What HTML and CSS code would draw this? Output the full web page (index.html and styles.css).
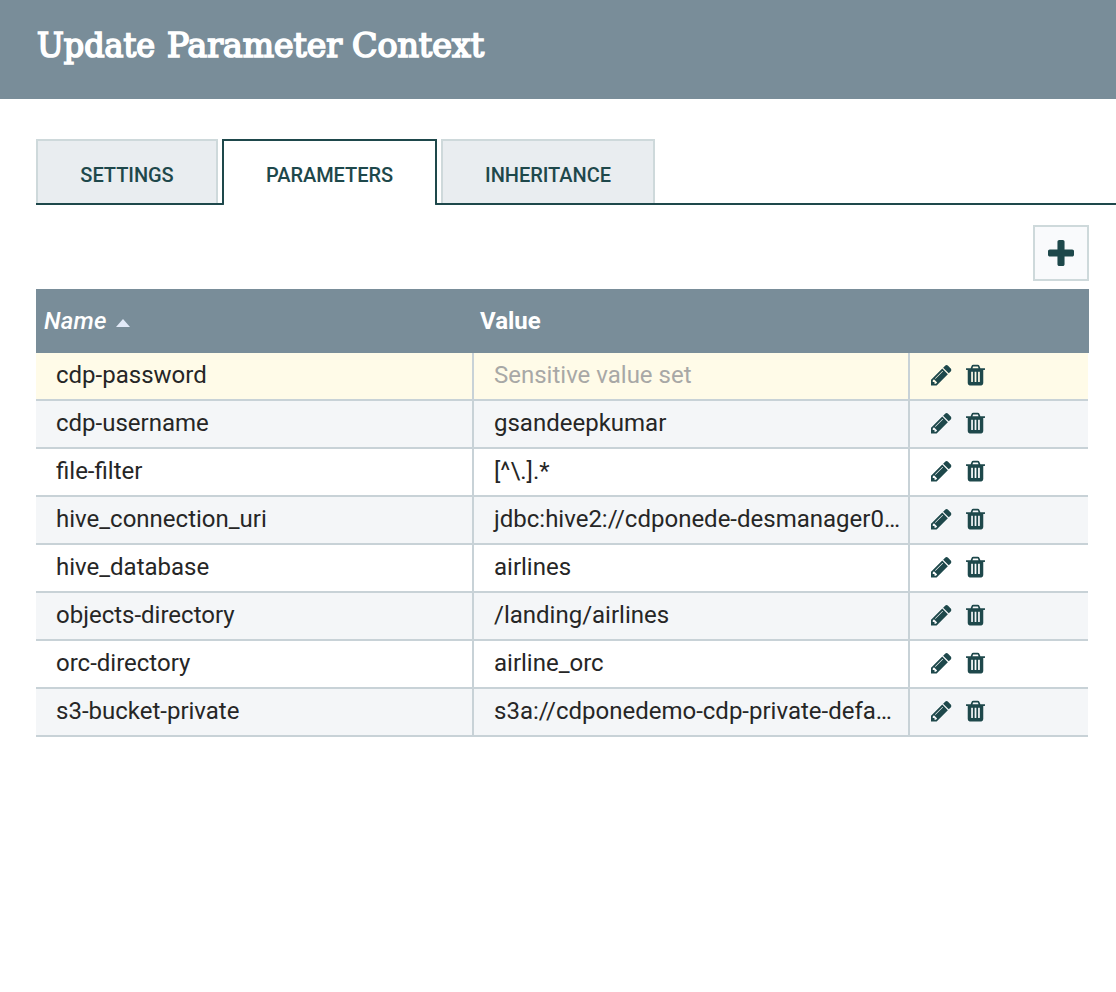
FILE: index.html
```
<!DOCTYPE html>
<html lang="en">
<head>
<meta charset="utf-8">
<title>Update Parameter Context</title>
<link rel="stylesheet" href="styles.css">
</head>
<body>
<svg class="defs" aria-hidden="true">
  <symbol id="pencil" viewBox="0 0 1515 1792"><path d="M363 1536l91-91-235-235-91 91v107h128v128h107zM886 608q0-22-22-22-10 0-17 7L305 1135q-7 7-7 17 0 22 22 22 10 0 17-7l542-542q7-7 7-17zM832 416l416 416-832 832H0v-416zM1515 512q0 53-37 90l-166 166-416-416 166-165q36-38 90-38 53 0 91 38l235 234q37 39 37 91z"/></symbol>
  <symbol id="trash" viewBox="0 0 1408 1792"><path d="M512 1376V672q0-14-9-23t-23-9h-64q-14 0-23 9t-9 23v704q0 14 9 23t23 9h64q14 0 23-9t9-23zM768 1376V672q0-14-9-23t-23-9h-64q-14 0-23 9t-9 23v704q0 14 9 23t23 9h64q14 0 23-9t9-23zM1024 1376V672q0-14-9-23t-23-9h-64q-14 0-23 9t-9 23v704q0 14 9 23t23 9h64q14 0 23-9t9-23zM480 384h448l-48-117q-7-9-17-11H546q-10 2-17 11zM1408 416v64q0 14-9 23t-23 9h-96v948q0 83-47 143.5t-113 60.5H288q-66 0-113-58.5T128 1464V512H32q-14 0-23-9t-9-23v-64q0-14 9-23t23-9h309l70-167q15-37 54-63t79-26h320q40 0 79 26t54 63l70 167h309q14 0 23 9t9 23z"/></symbol>
  <symbol id="plus" viewBox="0 128 1408 1408"><path d="M1408 736v192q0 40-28 68t-68 28H896v416q0 40-28 68t-68 28H608q-40 0-68-28t-28-68v-416H96q-40 0-68-28T0 928V736q0-40 28-68t68-28h416V224q0-40 28-68t68-28h192q40 0 68 28t28 68v416h416q40 0 68 28t28 68z"/></symbol>
</svg>
<header class="header">
  <svg class="title" width="460" height="99" role="heading">
    <text x="1" y="56.5" textLength="118" lengthAdjust="spacingAndGlyphs">Update</text>
    <text x="131" y="56.5" textLength="175" lengthAdjust="spacingAndGlyphs">Parameter</text>
    <text x="316" y="56.5" textLength="132" lengthAdjust="spacingAndGlyphs">Context</text>
  </svg>
</header>
<nav class="tabs">
  <div class="tab tab-settings">SETTINGS</div>
  <div class="tab tab-active">PARAMETERS</div>
  <div class="tab tab-inheritance">INHERITANCE</div>
</nav>
<main class="content">
  <div class="toolbar"><button class="add" aria-label="Add"><svg class="plus"><use href="#plus"/></svg></button></div>
  <div class="table">
    <div class="head"><div class="sorted">Name<span class="arrow"></span></div><div>Value</div></div>
    <div class="row selected"><div class="cell">cdp-password</div><div class="cell muted">Sensitive value set</div><div class="actions"><svg class="pencil"><use href="#pencil"/></svg><svg class="trash"><use href="#trash"/></svg></div></div>
    <div class="row"><div class="cell">cdp-username</div><div class="cell">gsandeepkumar</div><div class="actions"><svg class="pencil"><use href="#pencil"/></svg><svg class="trash"><use href="#trash"/></svg></div></div>
    <div class="row"><div class="cell">file-filter</div><div class="cell">[^\.].*</div><div class="actions"><svg class="pencil"><use href="#pencil"/></svg><svg class="trash"><use href="#trash"/></svg></div></div>
    <div class="row"><div class="cell">hive_connection_uri</div><div class="cell">jdbc:hive2://cdponede-desmanager0…</div><div class="actions"><svg class="pencil"><use href="#pencil"/></svg><svg class="trash"><use href="#trash"/></svg></div></div>
    <div class="row"><div class="cell">hive_database</div><div class="cell">airlines</div><div class="actions"><svg class="pencil"><use href="#pencil"/></svg><svg class="trash"><use href="#trash"/></svg></div></div>
    <div class="row"><div class="cell">objects-directory</div><div class="cell">/landing/airlines</div><div class="actions"><svg class="pencil"><use href="#pencil"/></svg><svg class="trash"><use href="#trash"/></svg></div></div>
    <div class="row"><div class="cell">orc-directory</div><div class="cell">airline_orc</div><div class="actions"><svg class="pencil"><use href="#pencil"/></svg><svg class="trash"><use href="#trash"/></svg></div></div>
    <div class="row"><div class="cell">s3-bucket-private</div><div class="cell">s3a://cdponedemo-cdp-private-defa…</div><div class="actions"><svg class="pencil"><use href="#pencil"/></svg><svg class="trash"><use href="#trash"/></svg></div></div>
  </div>
</main>
</body>
</html>
```
FILE: styles.css
```
* { box-sizing: border-box; }
body { margin: 0; background: #fff; font-family: Roboto, sans-serif; color: #262626; overflow: hidden; }
.defs { display: none; }
svg { display: block; fill: #1e484b; }
.header { height: 99px; padding-left: 36px; background: #798d99; }
.title { fill: #fff; stroke: #fff; stroke-width: 1.7px; font: 400 34px "Roboto Slab", "DejaVu Serif Condensed", "DejaVu Serif", serif; }
.tabs { display: flex; gap: 4px; height: 66px; margin: 40px 0 0 36px; background: linear-gradient(#1e484b, #1e484b) bottom / 100% 2px no-repeat; }
.tab { height: 64px; padding-top: 2px; border: 2px solid #ced9db; border-bottom: 0; background: #e9edf0; color: #1e484b; font-size: 20px; font-weight: 500; line-height: 64px; letter-spacing: -.05px; text-align: center; }
.tab-settings { width: 182px; }
.tab-active { width: 215px; height: 66px; border-color: #1e484b; border-radius: 0 0 2px 2px; background: #fff; }
.tab-inheritance { width: 214px; }
.content { width: 1053px; margin: 20px 0 0 36px; }
.toolbar { display: flex; justify-content: flex-end; height: 64px; }
.add { display: flex; align-items: center; justify-content: center; width: 56px; height: 56px; padding: 0 0 1px; border: 2px solid #ced9db; background: #f9fafc; }
.plus { width: 26px; height: 26px; }
.head { display: grid; grid-template-columns: 436px 1fr; height: 64px; padding-left: 8px; background: #798d99; color: #fff; font-size: 24px; font-weight: 700; line-height: 64px; }
.sorted { display: flex; align-items: center; gap: 9px; font-weight: 500; font-style: italic; letter-spacing: .25px; }
.arrow { margin-top: 3px; border: 7px solid transparent; border-top: 0; border-bottom: 8px solid #e2eaf8; }
.row { display: grid; grid-template-columns: 438px 436px 1fr; width: 1052px; height: 48px; border-bottom: 2px solid #c8d2d7; font-size: 24px; line-height: 44px; }
.row:nth-child(odd) { background: #f4f6f8; }
.row.selected { background: #fffbe8; }
.cell { padding-left: 20px; border-right: 2px solid #c8d2d7; white-space: nowrap; overflow: hidden; }
.muted { color: #a8a8a6; }
.actions { display: flex; gap: 14.5px; padding: 10.4px 0 0 21.4px; }
.pencil { width: 20.5px; height: 24.2px; }
.trash { width: 19px; height: 24.2px; }
```
